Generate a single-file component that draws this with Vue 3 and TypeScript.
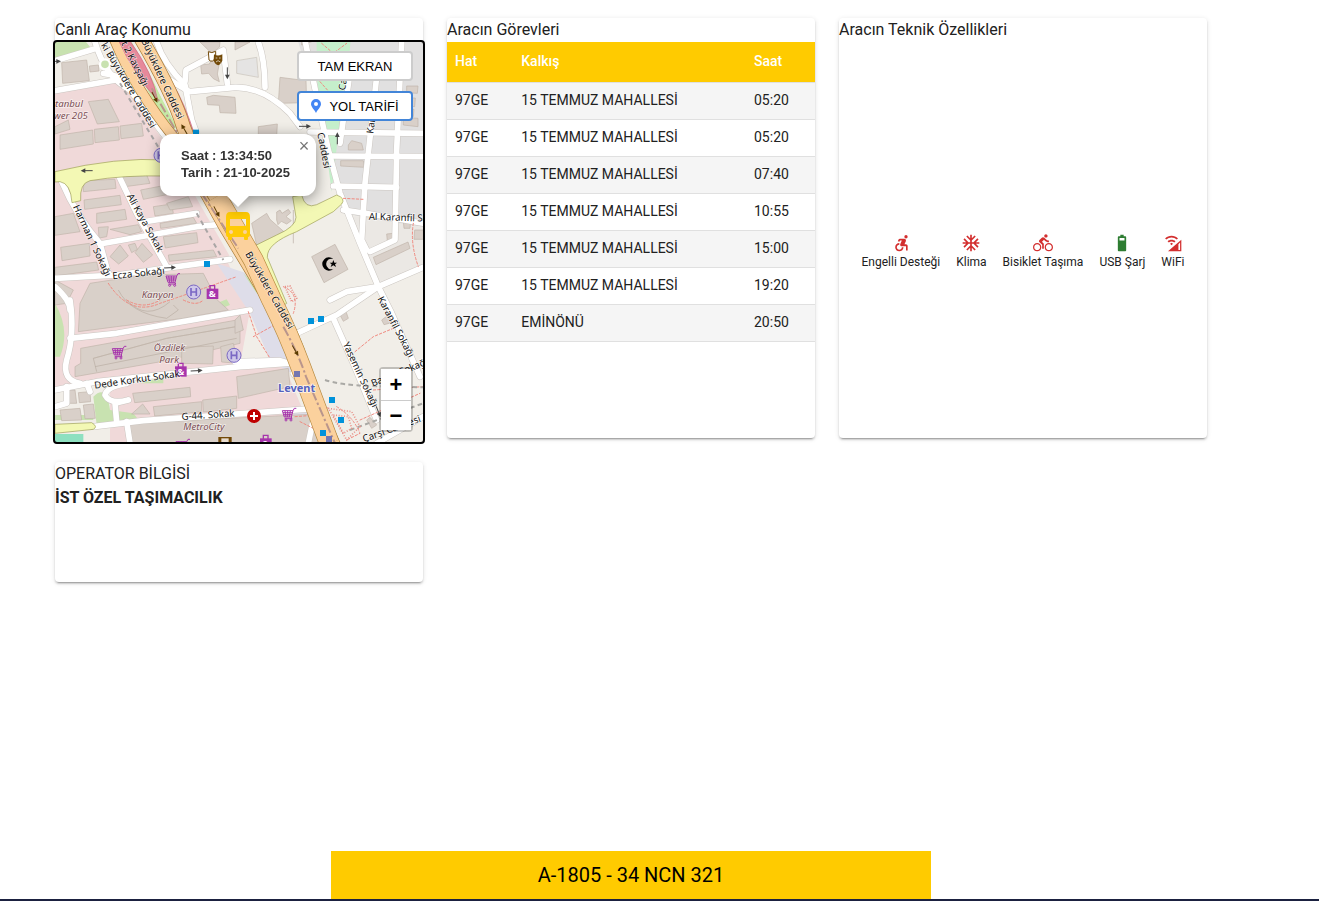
<script setup lang="ts">
interface Trip { line: string; from: string; time: string }
interface Feature { label: string; icon: string; on: boolean }
interface MapLabel { text: string; x: number; y: number; angle: number; kind: string }

const stop = '15 TEMMUZ MAHALLESİ'
const trips: Trip[] = [
  { line: '97GE', from: stop, time: '05:20' },
  { line: '97GE', from: stop, time: '05:20' },
  { line: '97GE', from: stop, time: '07:40' },
  { line: '97GE', from: stop, time: '10:55' },
  { line: '97GE', from: stop, time: '15:00' },
  { line: '97GE', from: stop, time: '19:20' },
  { line: '97GE', from: 'EMİNÖNÜ', time: '20:50' },
]

const features: Feature[] = [
  { label: 'Engelli Desteği', on: false, icon: 'M20 4.5a2 2 0 1 1-4 0a2 2 0 0 1 4 0zM15 17h-2c0 1.65-1.35 3-3 3s-3-1.35-3-3 1.35-3 3-3v-2c-2.76 0-5 2.24-5 5s2.24 5 5 5 5-2.24 5-5zm3-3.5h-1.86l1.67-3.67C18.42 8.5 17.44 7 15.96 7h-5.2c-.81 0-1.54.47-1.87 1.2L8.22 10l1.92.53.65-1.53H13l-1.83 4.1c-.6 1.33.39 2.9 1.85 2.9H18v5h2v-5.5c0-1.1-.9-2-2-2z' },
  { label: 'Klima', on: false, icon: 'M22 11h-4.17l3.24-3.24-1.41-1.42L15 11h-2V9l4.66-4.66-1.42-1.41L13 6.17V2h-2v4.17L7.76 2.93 6.34 4.34 11 9v2H9L4.34 6.34 2.93 7.76 6.17 11H2v2h4.17l-3.24 3.24 1.41 1.42L9 13h2v2l-4.66 4.66 1.42 1.41L11 17.83V22h2v-4.17l3.24 3.24 1.42-1.41L13 15v-2h2l4.66 4.66 1.41-1.42L17.83 13H22z' },
  { label: 'Bisiklet Taşıma', on: false, icon: 'M15.5 5.5c1.1 0 2-.9 2-2s-.9-2-2-2-2 .9-2 2 .9 2 2 2zM5 12c-2.8 0-5 2.2-5 5s2.2 5 5 5 5-2.2 5-5-2.2-5-5-5zm0 8.5c-1.9 0-3.5-1.6-3.5-3.5s1.6-3.5 3.5-3.5 3.5 1.6 3.5 3.5-1.6 3.5-3.5 3.5zm5.8-10l2.4-2.4.8.8c1.3 1.3 3 2.1 5.1 2.1V9c-1.5 0-2.7-.6-3.6-1.5l-1.9-1.9c-.5-.4-1-.6-1.6-.6s-1.1.2-1.4.6L7.8 8.4c-.4.4-.6.9-.6 1.4 0 .6.2 1.1.6 1.4L11 14v5h2v-6.2l-2.2-2.3zM19 12c-2.8 0-5 2.2-5 5s2.2 5 5 5 5-2.2 5-5-2.2-5-5-5zm0 8.5c-1.9 0-3.5-1.6-3.5-3.5s1.6-3.5 3.5-3.5 3.5 1.6 3.5 3.5-1.6 3.5-3.5 3.5z' },
  { label: 'USB Şarj', on: true, icon: 'M16 4h-2V2h-4v2H8c-.6 0-1 .4-1 1v16c0 .6.4 1 1 1h8c.6 0 1-.4 1-1V5c0-.6-.4-1-1-1zm-1 5H9V6h6z' },
  { label: 'WiFi', on: false, icon: 'M22 8V22H6zM18.500 13.500V20.500H20.500V11.500zM2.500 6.500C6.500 2.300 14 2.300 18 6.500L16.500 7.900C13 4.600 7.500 4.600 4 7.900zM5.500 10C8 7.600 12.500 7.600 15 10L13.500 11.400C11.800 9.800 8.700 9.800 7 11.400zM8.500 13L10.200 11.800 12 13 10.200 14.800z' },
]

/* Map geometry: three drawing units per screen pixel. */
const buildings: string[] = [
  '35,158 110,150 118,212 38,220', '118,168 145,165 147,183 120,186',
  '115,275 175,268 208,335 142,342', '30,375 128,360 130,402 30,418', '133,358 205,350 208,390 135,398', '210,348 275,340 280,378 213,386', '15,350 55,330 60,358 15,372',
  '450,96 510,96 508,112 485,130', '452,165 478,162 483,152 508,160 502,192 508,215 490,206 476,190 455,192', '470,262 490,256 555,262 558,310 510,308 508,286 473,284',
  '555,96 600,96 555,120', '690,202 768,212 770,278 685,280', '625,350 682,342 680,380 625,380',
  '755,70 800,70 800,90 755,105', '1070,228 1104,228 1102,250 1070,248', '1072,264 1096,264 1094,290 1072,288', '1070,298 1092,298 1090,320 1068,320', '1060,322 1104,325 1104,350 1060,345', '895,405 905,392 935,400 940,420 895,420',
  '102,512 195,508 198,535 100,545', '102,570 210,556 214,584 104,598', '140,610 225,598 230,628 140,640', '32,712 118,700 120,738 36,752', '15,772 140,756 146,780 15,798', '145,652 175,650 170,680 147,684', '180,658 265,644 275,665 240,674', '15,620 70,610 90,665 15,676',
  '180,740 210,705 235,738 206,762', '255,728 276,700 308,735 280,757', '235,705 255,700 262,718 245,728', '340,680 440,668 444,698 346,714', '355,735 445,725 490,720 500,740 358,754',
  '215,500 290,494 300,520 225,530', '272,540 350,525 360,552 280,568', '310,590 365,582 370,610 315,618', '330,640 430,622 440,640 332,655', '350,580 415,560 428,590 360,600',
  '605,640 650,610 660,628 705,668 620,706', '680,606 690,600 696,610 715,598 722,608 708,620 724,632 710,642 694,634 684,644 680,630',
  '785,740 855,703 894,778 822,818', '872,452 940,452 943,472 872,468', '970,742 1074,696 1080,715 978,764', '1060,635 1082,632 1080,655 1062,655', '1094,660 1120,660 1120,688 1092,688', '1010,672 1030,670 1028,692 1012,692',
  '185,810 290,795 460,790 500,868 535,900 400,925 200,950 85,965 90,880 120,820', '15,810 70,840 50,880 15,885', '130,1045 350,985 570,948 570,1000 350,1052 75,1100 75,1070 92,1060 92,1015 560,930 570,948 350,985',
  '395,1012 490,1008 488,1062 395,1060', '512,1010 550,1000 565,1060 515,1056', '248,1150 420,1132 422,1160 254,1178', '310,1190 455,1175 455,1205 314,1218', '458,1170 560,1158 560,1195 460,1206', '245,1212 278,1182 300,1212',
  '240,1240 800,1212 810,1300 245,1300', '560,1100 715,1075 720,1130 565,1165', '555,930 570,915 580,960 555,970', '50,1140 75,1140 80,1180 45,1180', '85,1148 120,1145 122,1175 88,1178', '30,1200 90,1195 95,1230 35,1232', '100,1185 130,1182 136,1225 105,1226', '870,915 888,905 895,925 880,934', '995,930 1015,915 1025,938 1002,944', '950,1230 960,1222 980,1245 965,1255',
]

const minorRoads: string[] = [
  'M15 152 L130 118', 'M15 242 L210 208', 'M135 96 Q165 200 240 240 L340 372 L500 585 L640 790 L640 830', 'M160 190 Q200 195 230 215', 'M345 200 Q390 230 420 245 L555 232 Q640 230 720 310 L750 350', 'M320 96 Q340 160 405 225 L425 330 L440 370', 'M405 215 L408 180 L520 120 L532 220', 'M625 96 Q645 150 645 232',
  'M766 96 L800 260 L835 420 L870 550 L930 700 L985 830 L1025 910 L1110 1100', 'M905 150 L870 400', 'M980 200 L945 520 L935 690 L950 720', 'M1055 96 L1040 420 L1035 690 L960 725', 'M780 366 L1119 370', 'M840 438 L1119 440', 'M850 528 L1040 532', 'M880 600 L960 612 L1119 640', 'M840 870 L890 845 L985 830 L1119 772', 'M740 970 L860 915 L985 830', 'M850 925 L910 1060 L980 1230', 'M15 805 L200 795 L540 748',
  'M35 515 Q80 620 150 700 L175 790', 'M205 495 L260 610 L350 770', 'M150 702 L440 650 L545 640', 'M285 635 L440 610', 'M15 1140 L140 1115 L570 1070 L740 1058', 'M60 985 L200 970 L370 940 L600 900', 'M60 870 Q75 970 50 1050 Q35 1110 90 1120', 'M15 830 Q60 870 60 900', 'M130 1250 L280 1232 L800 1195', 'M200 1235 L195 1180 L235 1170 Q180 1185 165 1155 Q170 1130 230 1120', 'M230 1235 L240 1300', 'M50 1130 L50 1180 L15 1190', 'M110 1120 L120 1145',
  'M555 1055 L690 1052 L745 1068', 'M980 1300 L1119 1220', 'M775 1300 L800 1180 L730 1090',
]

const paths: string[] = [
  'M175 820 Q240 920 330 880 Q420 850 560 800', 'M595 905 L620 980 L660 1045', 'M610 980 L700 930', 'M915 1025 L970 980 L1030 955', 'M880 565 L940 568', 'M1090 640 Q1080 700 1105 770', 'M700 830 Q750 850 730 910', 'M930 1230 L1110 1150', 'M970 1140 L1119 1130', 'M735 1220 L800 1215 M750 1235 L810 1265 M860 1190 Q910 1220 930 1270 L890 1290', 'M815 100 L850 130 L890 100 M810 215 L850 260', 'M230 870 Q280 900 330 870 M400 870 Q440 890 460 870',
]

const stops: number[][] = [[438, 368], [471, 762], [783, 933], [813, 927], [846, 1170], [873, 1230], [819, 1269]]

const labels: MapLabel[] = [
  { text: 'ki Büyükdere Caddesi', x: 152, y: 105, angle: 59, kind: 'road' },
  { text: 't 2 Kavşağı', x: 213, y: 100, angle: 63, kind: 'road' },
  { text: 'Büyükdere Caddesi', x: 273, y: 92, angle: 65, kind: 'road' },
  { text: 'Harman 1 Sokağı', x: 68, y: 590, angle: 65, kind: 'road' },
  { text: 'Ali Kaya Sokak', x: 230, y: 558, angle: 61, kind: 'road' },
  { text: 'Ecza Sokağı', x: 188, y: 808, angle: -6, kind: 'road' },
  { text: 'Büyükdere Caddesi', x: 585, y: 732, angle: 60, kind: 'road' },
  { text: 'Al Karanfil Sokağı', x: 956, y: 629, angle: 2, kind: 'road' },
  { text: 'Karanfil Sokağı', x: 982, y: 866, angle: 62, kind: 'road' },
  { text: 'Yasemin Sokağı', x: 878, y: 1002, angle: 65, kind: 'road' },
  { text: 'Dede Korkut Sokak', x: 134, y: 1136, angle: -8, kind: 'road' },
  { text: 'G-44. Sokak', x: 395, y: 1230, angle: -4, kind: 'road' },
  { text: 'Çarşı Caddesi', x: 942, y: 1297, angle: -20, kind: 'road' },
  { text: 'Bahçe Sokağı', x: 968, y: 1130, angle: -22, kind: 'road' },
  { text: 'Caddesi', x: 802, y: 370, angle: 79, kind: 'road' },
  { text: 'N.Caddesi', x: 880, y: 270, angle: -80, kind: 'road' },
  { text: 'Karanka', x: 970, y: 372, angle: -83, kind: 'road' },
  { text: 'tanbul', x: 15, y: 290, angle: 0, kind: 'place' },
  { text: 'wer 205', x: 11, y: 326, angle: 0, kind: 'place' },
  { text: 'Kanyon', x: 275, y: 865, angle: 0, kind: 'place' },
  { text: 'Özdilek', x: 311, y: 1023, angle: 0, kind: 'place' },
  { text: 'Park', x: 328, y: 1058, angle: 0, kind: 'place' },
  { text: 'MetroCity', x: 400, y: 1259, angle: 0, kind: 'place' },
  { text: 'Levent', x: 684, y: 1146, angle: 0, kind: 'station' },
]

const carts: number[][] = [[348, 794], [187, 1012], [697, 1198], [378, 1291]]
const bags: number[][] = [[470, 835], [375, 1068], [630, 1284]]
const metros: number[][] = [[431, 846], [552, 1036], [333, 436]]
const arrows: number[][] = [
  [15, 154, 0, 0], [532, 190, 90, 0], [110, 482, 180, 0], [360, 773, -3, 0], [440, 1082, -4, 0], [765, 349, 0, 0], [862, 385, -90, 0], [985, 1205, 68, 0],
  [314, 262, 63, 1], [403, 358, -120, 1], [500, 605, 62, 1], [736, 1022, 60, 1],
]
</script>

<template>
  <div class="page">
    <main class="grid">
      <section class="card">
        <h2>Canlı Araç Konumu</h2>
        <div class="map">
          <svg class="tiles" viewBox="15 96 1104 1200" preserveAspectRatio="xMinYMin slice" role="img" aria-label="Harita">
            <defs>
              <g id="cart" fill="none" stroke="#a734ac" stroke-width="3">
                <path d="M0 4 H32 L27 23 H6 Z M32 4 L36 -3 H42 M27 23 L29 28 H7 M8 4 L11 23 M16 4 V23 M24 4 L21 23 M2 10 H30 M4 16 H29" />
                <circle cx="11" cy="32" r="3" /><circle cx="26" cy="32" r="3" />
              </g>
              <g id="bag">
                <path d="M10 4 V-8 H24 V4" fill="none" stroke="#a734ac" stroke-width="4" />
                <path d="M0 1 H35 V32 H0Z" fill="#a734ac" />
                <text x="17" y="26" class="amp">&amp;</text>
              </g>
              <g id="arrow"><path d="M-18 0 H12" fill="none" stroke="currentColor" stroke-width="3" /><path d="M18 0 L4 -7 V7Z" fill="currentColor" /></g>
            </defs>
            <rect x="0" y="80" width="1140" height="1240" fill="#f1eee8" />
            <path d="M740 80 H1130 V660 L880 610 L835 400Z" fill="#e1e0e0" />
            <path d="M890 615 L1119 650 V780 L985 825Z" fill="#ebe8e4" />
            <path d="M0 240 L210 205 L345 400 L540 740 L0 810Z" fill="#f0d9d9" />
            <path d="M0 800 L530 750 L600 900 L570 1065 L0 1140Z" fill="#f0d9d9" />
            <path d="M180 1130 L570 1075 L700 1060 L800 1300 H180Z" fill="#f0d9d9" />
            <path d="M500 760 L620 800 L740 1040 L740 1100 L660 1050 L600 910Z M730 1200 H800 L840 1300 H740Z" fill="#dedde9" />
            <path d="M15 96 H108 L128 120 L15 148Z M15 880 Q62 960 30 1040 L15 1040Z M130 1160 Q170 1120 180 1200 L250 1210 L270 1235 L140 1245Z M270 1120 L340 1100 V1120Z M500 880 L530 868 L540 885 L515 895Z M580 790 L630 840 L620 850Z M15 1230 H130 V1215 H15Z" fill="#c8e2b0" />
            <path d="M800 90 H902 L895 165 L800 165Z M800 200 H890 L865 370 L845 545Z" fill="#c5efcb" />
            <path d="M15 1272 H100 V1300 H15Z" fill="#8ee0c0" />
            <path d="M560 152 L620 142 L625 202 L560 190Z" fill="#e5e4e3" stroke="#c9c2ba" stroke-width="2" />
            <g fill="#d9d0c9" stroke="#c0b3a9" stroke-width="2">
              <polygon v-for="(b, i) in buildings" :key="i" :points="b" />
            </g>
            <path d="M230 870 Q290 935 360 875 M135 1070 L560 985 M130 1045 L140 1085 M205 840 Q240 910 350 925 L385 900 L370 885 M730 600 V700" fill="none" stroke="#b8aca2" stroke-width="2" />
            <g fill="none" stroke-linecap="round" stroke-linejoin="round">
              <path v-for="(r, i) in minorRoads" :key="'c' + i" :d="r" stroke="#cbc6c1" stroke-width="20" />
              <path v-for="(r, i) in minorRoads" :key="'f' + i" :d="r" stroke="#ffffff" stroke-width="17" />
              <circle cx="165" cy="163" r="15" fill="#c8e2b0" stroke="#ffffff" stroke-width="7" />
              <path v-for="(p, i) in paths" :key="'p' + i" :d="p" stroke="#f08a80" stroke-width="3" stroke-dasharray="7 6" />
              <path d="M210 220 L330 420 M440 610 L520 750 M700 950 L790 1200" stroke="#a9a5a5" stroke-width="6" stroke-dasharray="14 12" stroke-linecap="butt" />
              <path d="M825 1110 Q870 1125 960 1128 L1119 1132 M900 1260 L1119 1180" stroke="#aaa9a5" stroke-width="6" stroke-dasharray="14 10" stroke-linecap="butt" />
            </g>
            <path d="M15 485 Q200 440 350 450 V498 Q220 495 120 512 Q88 520 92 572 L66 578 Q62 520 30 515 L15 516Z M15 1243 L125 1238 Q145 1250 130 1258 L15 1270Z" fill="#f3f8b4" stroke="#9b9d55" stroke-width="2" />
            <path d="M605 712 L680 675 Q738 650 738 622 L728 560 L755 555 Q765 598 800 584 L860 555 Q888 565 875 582 L850 605 L740 665 Q650 700 652 742 L710 880 L680 900 L590 740Z" fill="#f3f8b4" stroke="#9b9d55" stroke-width="2" />
            <path d="M245 96 L380 350 L360 370 L225 110Z" fill="#c5e8a5" />
            <path d="M290 90 Q330 150 365 215 Q405 280 435 378 L415 390 Q370 240 290 130Z" fill="#e6899b" stroke="#cf6580" stroke-width="2" />
            <path d="M190 80 Q250 230 370 380 L520 650 L665 890 Q720 970 750 1070 Q780 1160 850 1320" fill="none" stroke="#a87b36" stroke-width="32" />
            <path d="M190 80 Q250 230 370 380 L520 650 L665 890 Q720 970 750 1070 Q780 1160 850 1320" fill="none" stroke="#fbd19d" stroke-width="28" />
            <path d="M270 80 Q370 250 400 350 L455 490 Q500 570 560 655 L665 870 Q730 970 757 1070 Q780 1160 858 1320" fill="none" stroke="#a87b36" stroke-width="44" />
            <path d="M270 80 Q370 250 400 350 L455 490 Q500 570 560 655 L665 870 Q730 970 757 1070 Q780 1160 858 1320" fill="none" stroke="#fbd19d" stroke-width="40" />
            <path d="M500 560 L610 750 L665 870 Q715 970 752 1070 L838 1300" fill="none" stroke="#b5893f" stroke-width="62" />
            <path d="M500 560 L610 750 L665 870 Q715 970 752 1070 L838 1300" fill="none" stroke="#fbd19d" stroke-width="58" />
            <path d="M244 96 Q290 170 325 245 L350 300 L368 350 Q320 270 300 220 Q280 160 244 96Z" fill="#c5e8a5" />
            <path d="M205 90 Q250 190 323 272 Q310 190 238 90Z" fill="#e6899b" stroke="#cf6580" stroke-width="2" />
            <path d="M305 235 L385 375 M455 550 L565 715 M700 950 Q745 1030 768 1100 L855 1300" fill="none" stroke="#b9958c" stroke-width="6" stroke-dasharray="30 8 7 8" />
            <path d="M835 1195 L905 1205 L930 1250 L890 1290Z M850 1215 L895 1220 L905 1255 L880 1270Z" fill="none" stroke="#e89088" stroke-width="5" stroke-dasharray="3 5" />
            <path d="M705 830 L720 828 L740 865 L725 875Z" fill="none" stroke="#e89088" stroke-width="5" stroke-dasharray="3 4" />
            <rect v-for="(s, i) in stops" :key="'s' + i" :x="s[0] - 9" :y="s[1] - 9" width="18" height="18" fill="#0092da" />
            <path d="M732 1083 H750 V1101 H732Z M828 1278 H846 V1296 H828Z" fill="#7376b0" />
            <use v-for="(c, i) in carts" :key="'cart' + i" href="#cart" :x="c[0]" :y="c[1]" />
            <use v-for="(b, i) in bags" :key="'bag' + i" href="#bag" :x="b[0]" :y="b[1]" />
            <g v-for="(m, i) in metros" :key="'m' + i" :transform="`translate(${m[0]} ${m[1]})`" fill="#cfc8e8" stroke="#7b68c4" stroke-width="3">
              <circle r="21" /><path d="M-8 -12 V12 M8 -12 V12 M-8 0 H8" stroke-width="5" />
            </g>
            <g v-for="(a, i) in arrows" :key="'a' + i" :class="a[3] ? 'brown' : 'grey'" :transform="`translate(${a[0]} ${a[1]}) rotate(${a[2]})`"><use href="#arrow" /></g>
            <path d="M850 747 A20 20 0 1 0 850 777 A16 16 0 1 1 850 747Z M850 750 L853 758 L861 758 L855 763 L858 771 L850 766 L842 771 L845 763 L839 758 L847 758Z" fill="#000" />
            <circle cx="612" cy="1218" r="21" fill="#bf0000" /><path d="M612 1206 V1230 M600 1218 H624" stroke="#fff" stroke-width="6" />
            <path d="M475 125 Q485 131 497 124 V142 Q488 160 477 150Z" fill="#fff" stroke="#734a08" stroke-width="3" />
            <path d="M492 133 Q504 140 517 133 V152 Q510 165 504 166 Q494 163 491 151Z" fill="#734a08" /><path d="M497 144 H502 M507 144 H512 M498 156 Q504 148 511 156" fill="none" stroke="#fff" stroke-width="2" />
            <path d="M505 1281 H545 V1296 H505Z" fill="#734a08" /><path d="M514 1285 H536 V1296 H514Z" fill="#e8ddd0" />
            <text v-for="(l, i) in labels" :key="'l' + i" :class="l.kind" :transform="`translate(${l.x} ${l.y}) rotate(${l.angle})`">{{ l.text }}</text>
          </svg>
          <svg class="bus" viewBox="0 0 26 30" aria-label="Otobüs"><path fill="#ffcb05" fill-rule="evenodd" d="M5 1H21Q25 1 25 6V23Q25 26 23 26V28Q23 29 22 29H20Q19 29 19 28V26H7V28Q7 29 6 29H4Q3 29 3 28V26Q1 26 1 23V6Q1 1 5 1ZM5 8V15H21V8ZM6 19A2 2 0 1 0 6 23A2 2 0 1 0 6 19ZM20 19A2 2 0 1 0 20 23A2 2 0 1 0 20 19Z" /></svg>
          <div class="popup">
            <p>Saat : 13:34:50<br />Tarih : 21-10-2025</p>
            <button type="button" class="close" aria-label="Kapat">×</button>
          </div>
          <div class="actions">
            <button type="button" class="full">TAM EKRAN</button>
            <button type="button" class="route">
              <svg viewBox="0 0 10 14" aria-hidden="true"><path fill="#4285f4" fill-rule="evenodd" d="M5 0A5 5 0 0 0 0 5C0 8 3 10 5 14C7 10 10 8 10 5A5 5 0 0 0 5 0ZM5 3A2 2 0 1 1 5 7A2 2 0 1 1 5 3Z" /></svg>
              YOL TARİFİ
            </button>
          </div>
          <div class="zoom">
            <button type="button" aria-label="Yakınlaştır">+</button>
            <button type="button" aria-label="Uzaklaştır">−</button>
          </div>
        </div>
      </section>

      <section class="card">
        <h2>Aracın Görevleri</h2>
        <table>
          <thead><tr><th class="line">Hat</th><th>Kalkış</th><th class="time">Saat</th></tr></thead>
          <tbody>
            <tr v-for="(t, i) in trips" :key="i"><td>{{ t.line }}</td><td>{{ t.from }}</td><td>{{ t.time }}</td></tr>
          </tbody>
        </table>
      </section>

      <section class="card tech">
        <h2>Aracın Teknik Özellikleri</h2>
        <ul>
          <li v-for="f in features" :key="f.label">
            <svg viewBox="0 0 24 24" :class="{ on: f.on }" aria-hidden="true"><path fill-rule="evenodd" :d="f.icon" /></svg>
            <span>{{ f.label }}</span>
          </li>
        </ul>
      </section>

      <section class="card operator">
        <h2>OPERATOR BİLGİSİ</h2>
        <strong>İST ÖZEL TAŞIMACILIK</strong>
      </section>
    </main>
    <footer><div class="plate">A-1805 - 34 NCN 321</div></footer>
  </div>
</template>

<style>
body { margin: 0; background: #fff; }
</style>

<style scoped>
* { box-sizing: border-box; }
.page { min-height: 100vh; display: flex; flex-direction: column; font-family: Roboto, "Liberation Sans", sans-serif; font-size: 16px; line-height: 24px; color: #212121; }
.grid { display: grid; grid-template-columns: repeat(3, 1fr); gap: 24px; padding: 18px 112px 24px 55px; align-items: start; }
.card { min-height: 420px; height: 420px; min-width: 0; border-radius: 4px; background: #fff; box-shadow: 0 3px 1px -2px rgba(0, 0, 0, .2), 0 2px 2px rgba(0, 0, 0, .14), 0 1px 5px rgba(0, 0, 0, .12); }
.operator { min-height: 120px; height: auto; }
h2 { margin: 0; font-size: 16px; line-height: 24px; font-weight: 400; }
strong { display: block; font-weight: 700; }
button { font-family: "Liberation Sans", Arial, sans-serif; cursor: pointer; }
.map { position: relative; height: 400px; outline: 2px solid #000; border-radius: 2px; }
.tiles { display: block; width: 100%; height: 100%; overflow: hidden; }
.road { font: 29px "Noto Sans", sans-serif; fill: #111; stroke: rgba(255, 255, 255, .6); stroke-width: 4px; paint-order: stroke; }
.place { font: italic 29px "Noto Sans", sans-serif; fill: #7c4e54; stroke: rgba(255, 255, 255, .6); stroke-width: 4px; paint-order: stroke; }
.station { font: bold 33px "Noto Sans", sans-serif; fill: #5561bd; stroke: rgba(255, 255, 255, .8); stroke-width: 5px; paint-order: stroke; }
.amp { font: bold 28px "Noto Sans", sans-serif; fill: #fff; text-anchor: middle; }
.grey { color: #444; }
.brown { color: #5b3b00; }
.bus { position: absolute; left: 50%; top: 169px; width: 26px; height: 30px; margin-left: -14px; }
.popup { position: absolute; left: 105px; top: 92px; width: 156px; height: 62px; padding: 13px 21px; border-radius: 12px; background: #fff; filter: drop-shadow(0 3px 7px rgba(0, 0, 0, .4)); }
.popup::after { content: ""; position: absolute; left: 66px; top: 61px; border: 12px solid transparent; border-bottom-width: 0; border-top-color: #fff; }
.popup p { margin: 0; white-space: nowrap; font: bold 13px/17px "Liberation Sans", Arial, sans-serif; color: #333; }
.close { position: absolute; right: 0; top: 0; width: 24px; height: 24px; padding: 0; border: 0; background: none; font-size: 18px; line-height: 24px; color: #757575; }
.actions { position: absolute; right: 10px; top: 9px; display: flex; flex-direction: column; align-items: flex-end; gap: 10px; }
.actions button { display: flex; align-items: center; justify-content: center; gap: 8px; width: 116px; height: 30px; padding: 0; border: 2px solid #ccc; border-radius: 4px; background: #fff; font-size: 13px; color: #000; }
.actions .route { border-color: #4285d8; }
.route svg { width: 10px; height: 14px; }
.zoom { position: absolute; right: 10px; bottom: 10px; width: 34px; border: 2px solid rgba(0, 0, 0, .2); border-radius: 4px; background-clip: padding-box; }
.zoom button { display: block; width: 30px; height: 31px; padding: 0; border: 0; background: #fff; color: #000; font-size: 22px; line-height: 30px; font-weight: bold; }
.zoom button + button { border-top: 1px solid #ccc; height: 30px; }
table { width: 100%; table-layout: fixed; border-collapse: separate; border-spacing: 0; font-size: 14px; line-height: 20px; }
th, td { padding: 7px 8px 9px; text-align: left; border-bottom: 1px solid #e0e0e0; }
th { height: 41px; background: #ffcb00; color: #fff; font-weight: 500; line-height: 24px; }
.line { width: 18%; }
.time { width: 69px; }
tbody tr:nth-child(odd) { background: #f5f5f5; }
.tech { display: flex; flex-direction: column; }
ul { flex: 1; display: flex; justify-content: center; align-items: center; gap: 16px; margin: 0; padding: 24px 0 0; list-style: none; }
li { display: flex; flex-direction: column; align-items: center; font-size: 12px; line-height: 18px; white-space: nowrap; }
li svg { width: 20px; height: 20px; fill: #d32f2f; }
li svg.on { fill: #2e7d32; }
footer { margin-top: auto; padding: 0 57px 0 0; border-bottom: 2px solid #1b2140; }
.plate { width: 100%; max-width: 600px; height: 48px; margin: 0 auto; background: #ffcb00; color: #000; text-align: center; font-size: 20px; line-height: 48px; }
</style>
